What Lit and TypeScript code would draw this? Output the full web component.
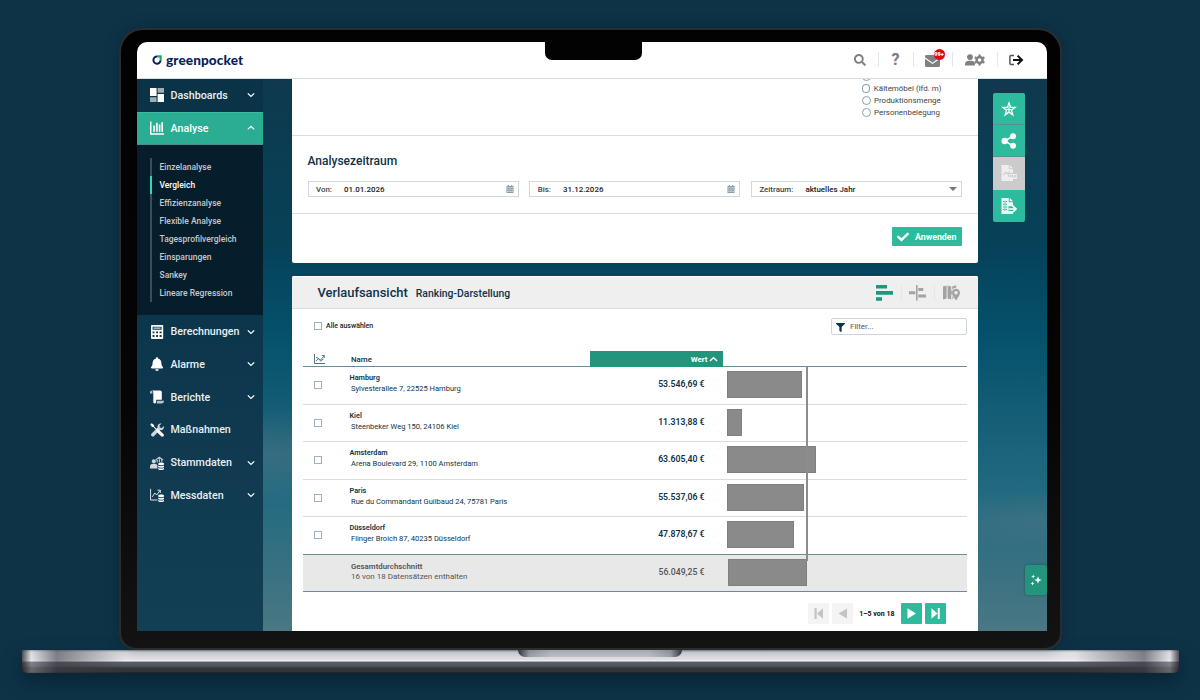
import { LitElement, html, svg, css } from "lit";
import { customElement, property, state } from "lit/decorators.js";
import { classMap } from "lit/directives/class-map.js";
import { styleMap } from "lit/directives/style-map.js";
import { map } from "lit/directives/map.js";
import { when } from "lit/directives/when.js";

type MenuEntry = {
    label: string,
    icon: string,
    expandable: boolean,
    children?: string[]
}

type RankingRow = {
    name: string,
    address: string,
    label: string,
    value: number
}

const MENU: MenuEntry[] = [
    { label: "Dashboards", icon: "dashboards", expandable: true },
    {
        label: "Analyse", icon: "analyse", expandable: true, children: [
            "Einzelanalyse",
            "Vergleich",
            "Effizienzanalyse",
            "Flexible Analyse",
            "Tagesprofilvergleich",
            "Einsparungen",
            "Sankey",
            "Lineare Regression",
        ]
    },
    { label: "Berechnungen", icon: "calculator", expandable: true },
    { label: "Alarme", icon: "bell", expandable: true },
    { label: "Berichte", icon: "scroll", expandable: true },
    { label: "Maßnahmen", icon: "tools", expandable: false },
    { label: "Stammdaten", icon: "masterdata", expandable: true },
    { label: "Messdaten", icon: "measurements", expandable: true },
]

const ROWS: RankingRow[] = [
    { name: "Hamburg", address: "Sylvesterallee 7, 22525 Hamburg", label: "53.546,69 €", value: 53546.69 },
    { name: "Kiel", address: "Steenbeker Weg 150, 24106 Kiel", label: "11.313,88 €", value: 11313.88 },
    { name: "Amsterdam", address: "Arena Boulevard 29, 1100 Amsterdam", label: "63.605,40 €", value: 63605.4 },
    { name: "Paris", address: "Rue du Commandant Guilbaud 24, 75781 Paris", label: "55.537,06 €", value: 55537.06 },
    { name: "Düsseldorf", address: "Flinger Broich 87, 40235 Düsseldorf", label: "47.878,67 €", value: 47878.67 },
]

const AVERAGE = 56049.25
const PX_PER_EURO = 0.0014

type Icon = {
    box: string,
    body: unknown
}

const database = svg`
    <path d="M8.2 7.6c0-1.5 5.8-1.5 5.8 0v.7c0 1.4-5.8 1.4-5.8 0z"/>
    <path d="M8.2 9.5c1.4.9 4.4.9 5.8 0v1.2c0 1.3-5.8 1.3-5.8 0z"/>
    <path d="M8.2 11.9c1.4.9 4.4.9 5.8 0v1c0 1.4-5.8 1.4-5.8 0z"/>`

const ICONS: Record<string, Icon> = {
    dashboards: {
        box: "0 0 14 14", body: svg`
        <path d="M0 0h6.6v8H0zM7.6 6h6.4v8H7.6z"/>
        <path opacity=".6" d="M0 9.2h6.6V14H0zM7.6 0H14v4.8H7.6z"/>`
    },
    analyse: {
        box: "0 0 14 14", body: svg`
        <path d="M0 .5h1.5v11.8H14v1.4H0z"/>
        <path d="M3.2 4.5h1.7v6.2H3.2zM6.1 1.8h1.6v8.9H6.1zM8.8 3.4h1.6v7.3H8.8zM11.4 1.2h1.6v9.5h-1.6z"/>`
    },
    calculator: {
        box: "0 0 14 14", body: svg`
        <path fill-rule="evenodd" d="M2 0h10.2c.6 0 1 .4 1 1v12c0 .6-.4 1-1 1H2c-.6 0-1-.4-1-1V1c0-.6.4-1 1-1zm.6 1.7v3h9v-3zM2.6 6.4v1.8h1.9V6.4zm3.5 0v1.8H8V6.4zm3.5 0v1.8h2V6.4zM2.6 10v2h1.9v-2zm3.5 0v2H8v-2zm3.5 0v2h2v-2z"/>
        <path d="M3.6 2.6h7v1h-7z"/>`
    },
    bell: {
        box: "0 0 448 512", body: svg`
        <path d="M224 512c35.32 0 63.97-28.65 63.97-64H160.03c0 35.35 28.65 64 63.97 64zm215.39-149.71c-19.32-20.76-55.47-51.99-55.47-154.29 0-77.7-54.48-139.9-127.94-155.16V32c0-17.67-14.32-32-31.98-32s-31.98 14.33-31.98 32v20.84C118.56 68.1 64.08 130.3 64.08 208c0 102.3-36.15 133.53-55.47 154.29-6 6.45-8.66 14.16-8.61 21.71.11 16.4 12.98 32 32.1 32h383.8c19.12 0 32-15.6 32.1-32 .05-7.55-2.61-15.27-8.61-21.71z"/>`
    },
    scroll: {
        box: "0 0 14 14", body: svg`
        <path opacity=".7" d="M0 2.2C0 .2 2.4.2 2.4 2.2v1.2H0z"/>
        <path d="M1.8.5h8.4c1 0 1.6.8 1.6 1.7v7.6H6.2v2c0 1.2-.6 1.7-1.4 1.7-.9 0-1.5-.7-1.5-1.7V2.6C3.3 1.400 2.600.7 1.800.5z"/>
        <path opacity=".7" d="M7.200 10.700H14c0 1.800-.8 2.800-2.200 2.800H6.300c.7-.6.9-1.500.9-2.800z"/>`
    },
    tools: {
        box: "0 0 14 14", body: svg`
        <path opacity=".8" d="M13.800 3.100c.4 1.500 0 2.600-.9 3.400-.8.700-1.900.9-2.900.6l-5.900 5.900c-.7.700-1.800.700-2.500 0s-.7-1.800 0-2.500l6-5.900c-.3-1 0-2.200.7-3C9.100.7 10.400.2 11.600.500L9.500 2.600l.4 2 2 .400z"/>
        <path d="M.2 1.500L1.600.200l2.500 1.900v1.300L7.500 6.800l1.200-.4 4.700 4.600c.7.700.7 1.700 0 2.300s-1.600.7-2.300 0L6.500 8.700l.3-1.200-3.400-3.400H2.100z"/>`
    },
    masterdata: {
        box: "0 0 14 14", body: svg`
        <circle cx="3.800" cy="5.300" r="2" opacity=".8"/>
        <path opacity=".8" d="M0 12.500V10.400C0 8.500 1.300 7.700 3 7.700h1.600c1.400 0 2.500.6 2.800 1.800v3z"/>
        <path fill="none" stroke="currentColor" stroke-width="1.200" opacity=".7" d="M5.700 3.900L9.300 1.200l3.800 2.900M7.200 4v2.500M11.700 3v2.800M9.400 3.300v3"/>
        ${database}`
    },
    measurements: {
        box: "0 0 14 14", body: svg`
        <path fill="none" stroke="currentColor" opacity=".85" d="M.6.800v11.200h6.800M2.300 8.800L4.800 5l1.900 2L10 2.600M7.500 2.200h2.800v2.700"/>
        ${database}`
    },
    search: {
        box: "0 0 512 512", body: svg`
        <path d="M505 442.7L405.3 343c-4.5-4.5-10.6-7-17-7H372c27.6-35.3 44-79.7 44-128C416 93.1 322.9 0 208 0S0 93.1 0 208s93.1 208 208 208c48.3 0 92.7-16.4 128-44v16.3c0 6.4 2.5 12.5 7 17l99.7 99.7c9.4 9.4 24.6 9.4 33.9 0l28.3-28.3c9.4-9.4 9.4-24.6.1-34zM208 336c-70.7 0-128-57.2-128-128 0-70.7 57.2-128 128-128 70.7 0 128 57.2 128 128 0 70.7-57.2 128-128 128z"/>`
    },
    mail: {
        box: "0 0 15 12", body: svg`
        <path d="M0 1.500C0 .6.600 0 1.500 0h12c.9 0 1.500.6 1.500 1.500v.8L7.500 7.700 0 2.300z"/>
        <path d="M0 3.800l7.500 5.300L15 3.800v6.700c0 .9-.6 1.500-1.500 1.500h-12C.6 12 0 11.400 0 10.500z"/>`
    },
    usercog: {
        box: "0 0 20 12", body: svg`
        <circle cx="5" cy="3.100" r="2.900"/>
        <path d="M0 11.500v-1.300C0 8.200 1.600 6.800 3.500 6.800h3c1.600 0 3 .9 3.400 2.300v2.400z"/>
        <circle cx="14.600" cy="6" r="3" fill="none" stroke="currentColor" stroke-width="2.400"/>
        <path fill="none" stroke="currentColor" stroke-width="2.200" d="M14.600.5v2M14.600 9.500v2M9.800 3.300l1.800 1M17.600 7.700l1.800 1M9.800 8.700l1.800-1M17.600 4.300l1.800-1"/>`
    },
    logout: {
        box: "0 0 14 12", body: svg`
        <path fill="none" stroke="#555" stroke-width="1.500" d="M5 1.500H2.200c-.8 0-1.300.5-1.300 1.300v6.400c0 .8.5 1.300 1.300 1.300H5"/>
        <path fill="none" stroke="currentColor" stroke-width="2" d="M4 6h8.500M8.600 1.600L13 6l-4.400 4.400"/>`
    },
    calendar: {
        box: "0 0 8 9", body: svg`
        <path d="M0 1.200h1.500V0h1.300v1.200h2.400V0h1.300v1.200H8v1.500H0z"/>
        <path fill-rule="evenodd" d="M0 3.200h8V9H0zM1 4.200v1h1.300v-1zm2.300 0v1h1.400v-1zm2.400 0v1H7v-1zM1 6.600v1h1.300v-1zm2.300 0v1h1.400v-1zm2.400 0v1H7v-1z"/>`
    },
    check: {
        box: "0 0 512 512", body: svg`
        <path d="M173.898 439.404l-166.4-166.4c-9.997-9.997-9.997-26.206 0-36.204l36.203-36.204c9.997-9.998 26.207-9.998 36.204 0L192 312.69 432.095 72.596c9.997-9.997 26.207-9.997 36.204 0l36.203 36.204c9.997 9.997 9.997 26.206 0 36.204l-294.4 294.401c-9.998 9.997-26.207 9.997-36.204-.001z"/>`
    },
    filter: {
        box: "0 0 512 512", body: svg`
        <path d="M487.976 0H24.028C2.71 0-8.047 25.866 7.058 40.971L192 225.941V432c0 7.831 3.821 15.17 10.237 19.662l80 55.98C298.02 518.69 320 507.493 320 487.98V225.941l184.947-184.97C520.021 25.896 509.338 0 487.976 0z"/>`
    },
    star: {
        box: "0 0 16 16", body: svg`
        <path fill-rule="evenodd" d="M8 0l2 5.700 6 .1-4.800 3.700L13 15.400 8 11.900 3 15.400l1.800-5.900L0 5.800l6-.1zm0 4L7 7.100l-3.200.1 2.500 1.900-.9 3L8 10.300l2.600 1.800-.9-3 2.500-1.900L9 7.100z"/>
        <path d="M7.400 6.200h1.200v1.700h1.700v1.200H8.600v1.700H7.400V9.100H5.700V7.900h1.700z"/>`
    },
    share: {
        box: "0 0 16 16", body: svg`
        <circle cx="3.700" cy="8" r="3.200"/>
        <circle cx="12" cy="3.200" r="3"/>
        <circle cx="12" cy="12.800" r="3"/>
        <path fill="none" stroke="currentColor" stroke-width="1.500" d="M12 3.200L3.700 8l8.300 4.800"/>`
    },
    reportPdf: {
        box: "0 0 16 16", body: svg`
        <path fill-rule="evenodd" d="M.5 0h7.300v4.200H12V8H7v4h5v4H.5zM2 9.700l.7.700 2-2.500 1.700 1.600 2.600-3-.7-.6-2 2.200L4.600 6.500z"/>
        <path d="M8.800 0L12 3.200H8.800z"/>
        <path fill-rule="evenodd" d="M7.800 9H16v5H7.800zm.8 1v3h.7v-1h1v-2zm2.400 0v3h1.500v-3zm2.700 0v3h.7v-1h.9v-.7h-.9V10.700h1V10z"/>`
    },
    reportExport: {
        box: "0 0 16 16", body: svg`
        <path fill-rule="evenodd" d="M.5 0h7.300v4.200H12v4H7.500V13H12v3H.5zM2 3v1h4V3zm0 2.700v1h4v-1zm0 2.700v1h4v-1zm0 2.700v1h4v-1zM3.600 3v10h.7V3z" opacity=".9"/>
        <path d="M8.800 0L12 3.200H8.800z"/>
        <path fill="none" stroke="currentColor" stroke-width="1.700" d="M7.500 11h7M11.400 7.500L15 11l-3.600 3.500"/>`
    },
    ranking: {
        box: "0 0 17 16", body: svg`
        <path d="M0 0h11v3.600H0zM0 6.100h17v3.600H0zM0 12.200h6v3.600H0z"/>`
    },
    deviation: {
        box: "0 0 17 16", body: svg`
        <path d="M7 0h1.600v15.500H7zM0 6.300h6.300v3H0zM9.300 3h5v3h-5zM9.300 9.500H17v3H9.300z"/>`
    },
    map: {
        box: "0 0 17 16", body: svg`
        <path d="M0 1.600L3.600.400v13L0 14.600zM4.600.4l3.600 1.200v13L4.600 13.400zM9.200 1.600L13.200.2v2.500C10.500 2.700 8.300 4.800 8.300 7.500c0 2 1 3.800 2.200 5.500l-1.300 1.300z"/>
        <path fill-rule="evenodd" d="M13 3.700c2.300 0 4 1.700 4 4 0 2.800-2.600 5.200-4 7.900-1.400-2.700-4-5.100-4-7.900 0-2.300 1.700-4 4-4zm0 2.300a1.700 1.700 0 100 3.400 1.700 1.700 0 000-3.400z"/>`
    },
    trend: {
        box: "0 0 11 10", body: svg`
        <path fill="none" stroke="currentColor" stroke-width=".9" d="M.5 0v9.500H11M2 7l2.500-2.500L6.500 6 10 2M2 3.500l2 .500 2.500 3L9.500 5M7.800 1.500h2.500v2.300"/>`
    },
    first: { box: "0 0 10 12", body: svg`<path d="M.5 0H3v12H.5zM10 .2v11.600L3.300 6z"/>` },
    previous: { box: "0 0 10 12", body: svg`<path d="M10 .5v11L.5 6z"/>` },
    next: { box: "0 0 10 12", body: svg`<path d="M.5.300L10 6 .5 11.700z"/>` },
    last: { box: "0 0 10 12", body: svg`<path d="M7.500 0H9.700v12H7.500zM.5.200L7.200 6 .5 11.800z"/>` },
    sparkles: {
        box: "0 0 12 12", body: svg`
        <path d="M8 2.300l1 2.700 2.800 1L9 7 8 9.800 7 7 4.200 6 7 5zM3.200.4l.6 1.500 1.500.6-1.500.6-.6 1.500-.6-1.500-1.500-.6 1.500-.6zM2.500 7.400l.6 1.500 1.500.6-1.500.6-.6 1.500-.6-1.500-1.500-.6 1.500-.6z"/>`
    },
    chevronDown: { box: "0 0 8 8", body: svg`<path fill="none" stroke="currentColor" stroke-width="1.300" d="M.8 2.400L4 5.400l3.200-3"/>` },
    chevronUp: { box: "0 0 8 8", body: svg`<path fill="none" stroke="currentColor" stroke-width="1.300" d="M.8 5.400L4 2.400l3.200 3"/>` },
}

@customElement("gp-icon")
export class GpIcon extends LitElement {
    static styles = css`
    :host{
        display: inline-flex;
        flex: none;
        width: 14px;
        height: 14px;
    }

    svg{
        width: 100%;
        height: 100%;
        fill: currentColor;
        overflow: visible;
    }
    `

    @property({ type: String })
    name = ""

    render() {
        const icon = ICONS[this.name]
        return html`<svg viewBox=${icon.box} aria-hidden="true">${icon.body}</svg>`
    }
}

@customElement("gp-header")
export class GpHeader extends LitElement {
    static styles = css`
    :host{
        display: flex;
        align-items: center;
        justify-content: space-between;
        box-sizing: border-box;
        height: 37px;
        padding: 0 13px 1px 15px;
        background-color: #ffffff;
        border-bottom: 1px solid #d9dedf;
    }

    .logo{
        display: flex;
        align-items: center;
        gap: 4.5px;
        color: #0a1f5e;
        font-family: Lato, sans-serif;
        font-size: 13.6px;
        font-weight: 900;
        letter-spacing: 0.1px;
        line-height: 18px;
    }

    .logo svg{
        width: 10px;
        height: 10px;
        margin-top: 1px;
    }

    .actions{
        display: flex;
        align-items: center;
        color: #808080;
    }

    .action{
        position: relative;
        display: flex;
        align-items: center;
        justify-content: center;
        height: 15px;
        border-right: 1px solid #e4e6e8;
    }

    .search{ width: 36px; }
    .help{ width: 34px; font-size: 16px; font-weight: 800; }
    .mail{ width: 38px; }
    .users{ width: 44px; }
    .logout{ width: 36px; color: #111111; border: 0; }

    .search gp-icon{ width: 12px; height: 12px; }
    .mail gp-icon{ width: 15px; height: 12px; margin-top: 3px; }
    .users gp-icon{ width: 20px; height: 12px; }
    .logout gp-icon{ width: 14px; height: 12px; }

    .badge{
        position: absolute;
        top: -3px;
        left: 20px;
        width: 11px;
        height: 11px;
        border-radius: 50%;
        background-color: #e30613;
        color: #ffffff;
        font-size: 5.500px;
        font-weight: 900;
        line-height: 11px;
        text-align: center;
    }
    `

    render() {
        return html`
        <div class="logo">
            <svg viewBox="0 0 10 10">
                <path d="M5 1.500A3.600 3.600 0 1 0 8.600 5.300" fill="none" stroke="#0a1f5e" stroke-width="2"/>
                <path d="M5 .3H9.700V5H7.600V2.400H5z" fill="#1ea653"/>
            </svg>
            <span>greenpocket</span>
        </div>
        <div class="actions">
            <div class="action search"><gp-icon name="search"></gp-icon></div>
            <div class="action help">?</div>
            <div class="action mail">
                <gp-icon name="mail"></gp-icon>
                <span class="badge">99+</span>
            </div>
            <div class="action users"><gp-icon name="usercog"></gp-icon></div>
            <div class="action logout"><gp-icon name="logout"></gp-icon></div>
        </div>
        `
    }
}

@customElement("gp-sidebar")
export class GpSidebar extends LitElement {
    static styles = css`
    :host{
        display: block;
        flex: none;
        width: 126px;
        background: linear-gradient(#0a3347, #0c364c 45%, #133f54);
        color: #e9eff2;
    }

    .entry{
        display: flex;
        align-items: center;
        box-sizing: border-box;
        height: 32.75px;
        padding: 0 8px 0 13px;
        font-size: 10.7px;
        font-weight: 500;
    }

    .entry.open{
        height: 33px;
        background-color: #2bad94;
        border-top: 1px solid #37bda3;
        border-bottom: 1px solid #4a8f8b;
        color: #ffffff;
    }

    .label{
        flex: 1;
        margin-left: 7px;
    }

    .entry gp-icon{
        color: #ffffff;
    }

    .entry .chevron{
        width: 8px;
        height: 8px;
    }

    .children{
        box-sizing: border-box;
        height: 170.500px;
        padding: 13px 0 0 13px;
        background-color: #061d2b;
    }

    .child{
        height: 18px;
        padding-left: 8px;
        border-left: 2px solid #3c4e59;
        color: #c3cacf;
        font-size: 8.500px;
        font-weight: 500;
        line-height: 18px;
    }

    .child.selected{
        border-color: #35d6b5;
        color: #ffffff;
    }
    `

    @state()
    selected = "Vergleich"

    render() {
        return html`${map(MENU, (entry) => html`
            <div class=${classMap({ entry: true, open: !!entry.children })}>
                <gp-icon name=${entry.icon}></gp-icon>
                <span class="label">${entry.label}</span>
                ${when(entry.expandable, () => html`
                <gp-icon class="chevron" name=${entry.children ? "chevronUp" : "chevronDown"}></gp-icon>
                `)}
            </div>
            ${when(entry.children, () => html`
            <div class="children">
                ${map(entry.children, (child) => html`
                <div class=${classMap({ child: true, selected: child === this.selected })}
                    @click=${() => { this.selected = child }}>${child}</div>
                `)}
            </div>
            `)}
        `)}`
    }
}

@customElement("gp-period-card")
export class GpPeriodCard extends LitElement {
    static styles = css`
    :host{
        display: flex;
        flex-direction: column;
        box-sizing: border-box;
        height: 184px;
        background-color: #ffffff;
        border-radius: 0 0 2px 2px;
        color: #0e3347;
    }

    .reference{
        display: flex;
        flex-direction: column;
        justify-content: flex-end;
        align-items: flex-end;
        box-sizing: border-box;
        height: 57px;
        padding: 0 36px 16px 0;
        overflow: hidden;
        border-bottom: 1px solid #d6dee2;
    }

    .radio{
        display: flex;
        align-items: center;
        flex: none;
        gap: 3.500px;
        width: 80px;
        height: 12.100px;
        color: #444444;
        font-size: 7.950px;
        line-height: 12px;
        white-space: nowrap;
    }

    .radio i{
        box-sizing: border-box;
        width: 9px;
        height: 9px;
        border: 1px solid #8ba0ad;
        border-radius: 50%;
    }

    .period{
        box-sizing: border-box;
        height: 78px;
        padding: 17px 15.500px 0 16px;
        border-bottom: 1px solid #d6dee2;
    }

    h2{
        margin: 0;
        font-size: 12px;
        font-weight: 500;
        line-height: 16px;
    }

    .fields{
        display: grid;
        grid-template-columns: 211px 211px 211px;
        gap: 10.700px;
        margin-top: 12px;
    }

    .field{
        display: flex;
        align-items: center;
        box-sizing: border-box;
        height: 16px;
        padding: 0 4px 0 7.500px;
        border: 1px solid #cfd8dd;
        font-size: 7.950px;
        font-weight: 500;
        color: #222222;
    }

    .field .name{
        color: #444444;
        margin-right: 12px;
    }

    .field .value{
        flex: 1;
    }

    .field gp-icon{
        width: 8px;
        height: 8px;
        color: #8a9eaa;
    }

    .caret{
        border: 4px solid transparent;
        border-top-color: #777777;
        border-bottom: 0;
    }

    .footer{
        display: flex;
        justify-content: flex-end;
        padding: 13px 16px 0 0;
    }

    button{
        display: flex;
        align-items: center;
        justify-content: space-between;
        width: 70px;
        height: 19px;
        padding: 0 5px;
        border: 0;
        border-radius: 1px;
        background-color: #2dba9d;
        color: #ffffff;
        font: 700 8.800px Roboto, sans-serif;
    }

    button gp-icon{
        width: 12px;
        height: 12px;
    }
    `

    references = ["Besucheranzahl", "Kältemöbel (lfd. m)", "Produktionsmenge", "Personenbelegung"]

    render() {
        return html`
        <div class="reference">
            ${map(this.references, (name) => html`<div class="radio"><i></i><span>${name}</span></div>`)}
        </div>
        <div class="period">
            <h2>Analysezeitraum</h2>
            <div class="fields">
                <div class="field">
                    <span class="name">Von:</span><span class="value">01.01.2026</span>
                    <gp-icon name="calendar"></gp-icon>
                </div>
                <div class="field">
                    <span class="name">Bis:</span><span class="value">31.12.2026</span>
                    <gp-icon name="calendar"></gp-icon>
                </div>
                <div class="field">
                    <span class="name">Zeitraum:</span><span class="value">aktuelles Jahr</span>
                    <span class="caret"></span>
                </div>
            </div>
        </div>
        <div class="footer">
            <button><gp-icon name="check"></gp-icon>Anwenden</button>
        </div>
        `
    }
}

@customElement("gp-ranking-card")
export class GpRankingCard extends LitElement {
    static styles = css`
    :host{
        display: block;
        box-sizing: border-box;
        flex: 1;
        min-height: 0;
        background-color: #ffffff;
        border-radius: 2px 2px 0 0;
        color: #0e3347;
    }

    .title{
        display: flex;
        align-items: center;
        box-sizing: border-box;
        height: 33px;
        padding: 0 18px 0 26px;
        background-color: #efefef;
        border-top: 1px solid #ffffff;
        border-bottom: 1px solid #d8dcde;
        border-radius: 2px 2px 0 0;
    }

    h2{
        margin: 0;
        font-size: 12.900px;
        font-weight: 500;
    }

    h3{
        flex: 1;
        margin: 2px 0 0 8px;
        font-size: 10.400px;
        font-weight: 500;
    }

    .views{
        display: flex;
        color: #a3a3a3;
    }

    .views span{
        display: flex;
        padding-left: 7.500px;
        margin-left: 8px;
        border-left: 1px solid #e6e6e6;
    }

    .views .active{
        color: #21967d;
        border-color: transparent;
    }

    .views gp-icon{
        width: 17px;
        height: 16px;
    }

    .content{
        padding: 0 11px 0 11.500px;
    }

    .tools{
        display: flex;
        align-items: center;
        height: 34px;
        padding-left: 11px;
        margin-bottom: 8px;
        font-size: 7px;
        font-weight: 500;
        color: #222222;
    }

    .box{
        box-sizing: border-box;
        width: 8px;
        height: 8px;
        border: 1px solid #9fb0ba;
    }

    .tools .text{
        flex: 1;
        margin-left: 4px;
    }

    .filter{
        display: flex;
        align-items: center;
        gap: 5px;
        box-sizing: border-box;
        width: 136px;
        height: 17px;
        padding-left: 4.500px;
        border: 1px solid #ccd6dc;
        border-radius: 2px;
        color: #555555;
        font-size: 7.950px;
        font-weight: 400;
    }

    .filter gp-icon{
        width: 9px;
        height: 9px;
        margin-top: 2px;
        color: #0e3347;
    }

    .row{
        display: grid;
        grid-template-columns: 46.500px 240px 133px 1fr;
        align-items: center;
        box-sizing: border-box;
        height: 37.500px;
        border-bottom: 1px solid #d6dddf;
    }

    .row.head{
        height: 16px;
        border-color: #6b8a9a;
        font-size: 7.900px;
        font-weight: 500;
    }

    .row.head gp-icon{
        width: 11px;
        height: 10px;
        margin-left: 11px;
        color: #4b6675;
    }

    .row.head .name{
        padding-left: 1.500px;
    }

    .sorted{
        display: flex;
        align-items: center;
        justify-content: flex-end;
        height: 16px;
        align-self: start;
        padding-right: 5px;
        background-color: #23957c;
        color: #ffffff;
        font-weight: 700;
        box-sizing: border-box;
    }

    .row.head .sorted gp-icon{
        width: 9px;
        height: 9px;
        margin: 0 0 0 1px;
        color: #ffffff;
    }

    .row .box{
        margin-left: 11px;
    }

    .name b{
        display: block;
        font-size: 7.300px;
        font-weight: 600;
        line-height: 11px;
    }

    .name small{
        display: block;
        padding-left: 1.500px;
        font-size: 7.550px;
        font-weight: 400;
        line-height: 12px;
    }

    .row:not(.head) .name{
        margin-top: -3px;
    }

    .amount{
        padding: 0 18px 2px 0;
        text-align: right;
        font-size: 8.700px;
        font-weight: 600;
    }

    .bar{
        height: 27px;
        margin: 0 0 1px 4px;
        background-color: #8a8a8a;
        box-shadow: inset 0 0 0 1px #7f7f7f;
        box-sizing: border-box;
    }

    .rows{
        position: relative;
    }

    .average-line{
        position: absolute;
        top: 0;
        left: 503px;
        width: 1.500px;
        height: 194px;
        background-color: #8c8c8c;
    }

    .row.last{
        border-color: #6b8a9a;
    }

    .row.summary{
        background-color: #e8e8e8;
        border-color: #6f8a94;
        color: #555555;
    }

    .summary .name{
        padding-left: 1.500px;
    }

    .row.summary .name b{
        font-size: 7.850px;
        line-height: 11px;
    }

    .row.summary .name small{
        padding: 0;
        font-size: 8px;
        line-height: 10px;
    }

    .summary .amount{
        font-weight: 500;
    }

    .summary .bar{
        margin-left: 5px;
    }

    .pager{
        display: flex;
        align-items: center;
        justify-content: flex-end;
        gap: 3px;
        margin-top: 11px;
        padding-right: 21px;
        color: #111111;
        font-size: 7px;
        font-weight: 700;
    }

    .pager span{
        margin: 0 3px;
    }

    .page{
        display: flex;
        align-items: center;
        justify-content: center;
        width: 21px;
        height: 21px;
        border-radius: 1px;
        background-color: #2dba9d;
        color: #ffffff;
    }

    .page.disabled{
        background-color: #f4f4f4;
        color: #c4c4c4;
    }

    .page gp-icon{
        width: 9px;
        height: 11px;
    }
    `

    __barWidth(value: number) {
        return styleMap({ width: `${(value * PX_PER_EURO).toFixed(1)}px` })
    }

    render() {
        return html`
        <div class="title">
            <h2>Verlaufsansicht</h2>
            <h3>Ranking-Darstellung</h3>
            <div class="views">
                <span class="active"><gp-icon name="ranking"></gp-icon></span>
                <span><gp-icon name="deviation"></gp-icon></span>
                <span><gp-icon name="map"></gp-icon></span>
            </div>
        </div>
        <div class="content">
            <div class="tools">
                <div class="box"></div>
                <div class="text">Alle auswählen</div>
                <div class="filter"><gp-icon name="filter"></gp-icon>Filter...</div>
            </div>
            <div class="row head">
                <gp-icon name="trend"></gp-icon>
                <div class="name">Name</div>
                <div class="sorted">Wert<gp-icon name="chevronUp"></gp-icon></div>
            </div>
            <div class="rows">
                ${map(ROWS, (row, index) => html`
                <div class=${classMap({ row: true, last: index === ROWS.length - 1 })}>
                    <div class="box"></div>
                    <div class="name"><b>${row.name}</b><small>${row.address}</small></div>
                    <div class="amount">${row.label}</div>
                    <div class="bar" style=${this.__barWidth(row.value)}></div>
                </div>
                `)}
                <div class="row summary">
                    <div></div>
                    <div class="name"><b>Gesamtdurchschnitt</b><small>16 von 18 Datensätzen enthalten</small></div>
                    <div class="amount">56.049,25 €</div>
                    <div class="bar" style=${this.__barWidth(AVERAGE + 1000)}></div>
                </div>
                <div class="average-line"></div>
            </div>
            <div class="pager">
                <div class="page disabled"><gp-icon name="first"></gp-icon></div>
                <div class="page disabled"><gp-icon name="previous"></gp-icon></div>
                <span>1–5 von 18</span>
                <div class="page"><gp-icon name="next"></gp-icon></div>
                <div class="page"><gp-icon name="last"></gp-icon></div>
            </div>
        </div>
        `
    }
}

@customElement("gp-toolbar")
export class GpToolbar extends LitElement {
    static styles = css`
    :host{
        display: flex;
        flex-direction: column;
        width: 32px;
    }

    .tool{
        display: flex;
        align-items: center;
        justify-content: center;
        box-sizing: border-box;
        height: 32.200px;
        border-bottom: 1px solid #54938b;
        background-color: #2dba9d;
        color: #ffffff;
    }

    .tool:first-child{ border-radius: 2px 2px 0 0; }
    .tool:last-child{ border-radius: 0 0 2px 2px; border: 0; }

    .tool.disabled{
        background-color: #cbcbcb;
        border-color: #b8d6cf;
        color: #eeeeee;
    }

    gp-icon{
        width: 16px;
        height: 16px;
    }
    `

    render() {
        return html`
        <div class="tool"><gp-icon name="star"></gp-icon></div>
        <div class="tool"><gp-icon name="share"></gp-icon></div>
        <div class="tool disabled"><gp-icon name="reportPdf"></gp-icon></div>
        <div class="tool"><gp-icon name="reportExport"></gp-icon></div>
        `
    }
}

@customElement("app-root")
export class AppRoot extends LitElement {
    static styles = css`
    :host{
        display: flex;
        flex-direction: column;
        align-items: center;
        box-sizing: border-box;
        width: 1200px;
        height: 700px;
        padding-top: 28px;
        overflow: hidden;
        background-color: #0e3347;
        font-family: Roboto, sans-serif;
    }

    .lid{
        position: relative;
        box-sizing: border-box;
        width: 943px;
        height: 622px;
        margin-right: 20px;
        padding: 12px 12px 16px 16px;
        border: 2px solid #2b2c2e;
        border-radius: 24px 24px 17px 17px;
        background: linear-gradient(#020202, #050505 60%, #131313);
        box-shadow: 0 0 14px rgba(4, 22, 34, 0.35);
    }

    .notch{
        position: absolute;
        top: 11px;
        left: 424px;
        width: 97px;
        height: 19px;
        border-radius: 0 0 7px 7px;
        background-color: #020202;
    }

    .screen{
        display: flex;
        flex-direction: column;
        height: 589px;
        width: 910px;
        overflow: hidden;
        border-radius: 10px 10px 0 0;
    }

    .body{
        position: relative;
        display: flex;
        flex: 1;
        min-height: 0;
        background:
            radial-gradient(ellipse 160px 50px at 14% 68%, rgba(110, 125, 140, 0.35), transparent),
            radial-gradient(ellipse 140px 30px at 100% 80%, rgba(110, 125, 140, 0.25), transparent),
            linear-gradient(#0f394e, #064158 30%, #04506a 45%, #226a80 75%, #4a7782);
    }

    .content{
        display: flex;
        flex-direction: column;
        gap: 13px;
        width: 686px;
        margin-left: 29px;
    }

    gp-toolbar{
        align-self: flex-start;
        margin: 14px 0 0 15px;
    }

    .assistant{
        position: absolute;
        right: 0;
        bottom: 36px;
        display: flex;
        align-items: center;
        justify-content: center;
        width: 22px;
        height: 30px;
        border-radius: 3px;
        background-color: #23957c;
        color: #ffffff;
        box-shadow: 0 0 3px rgba(0, 0, 0, 0.3);
    }

    .assistant gp-icon{
        width: 12px;
        height: 12px;
    }

    .base{
        display: flex;
        flex-direction: column;
        align-items: center;
        flex: none;
        width: 1157px;
        height: 23px;
        border-radius: 1px 1px 5px 5px;
        background:
            linear-gradient(90deg, rgba(40, 40, 48, 0.8), rgba(220, 220, 225, 0.3) 0.800%, rgba(60, 60, 70, 0.6) 3%, transparent 9%, transparent 91%, rgba(60, 60, 70, 0.6) 97%, rgba(220, 220, 225, 0.3) 99.200%, rgba(40, 40, 48, 0.8)),
            linear-gradient(#8b8d92, #dcdde2 2px, #e6e7eb 10px, #ffffff 11px, #5b5f68 12px, #50545d 16px, #34363a 18px, #333436 22px, #15181b);
        box-shadow: 0 8px 18px rgba(5, 22, 34, 0.55);
    }

    .grip{
        width: 164px;
        height: 7px;
        border-radius: 0 0 8px 8px;
        background: linear-gradient(90deg, #3a3b44, #a6a7ae 7%, #c6c7cd 20%, #c6c7cd 80%, #a6a7ae 93%, #3a3b44);
    }
    `

    render() {
        return html`
        <div class="lid">
            <div class="screen">
                <gp-header></gp-header>
                <div class="body">
                    <gp-sidebar></gp-sidebar>
                    <div class="content">
                        <gp-period-card></gp-period-card>
                        <gp-ranking-card></gp-ranking-card>
                    </div>
                    <gp-toolbar></gp-toolbar>
                    <div class="assistant"><gp-icon name="sparkles"></gp-icon></div>
                </div>
            </div>
            <div class="notch"></div>
        </div>
        <div class="base"><div class="grip"></div></div>
        `
    }
}
